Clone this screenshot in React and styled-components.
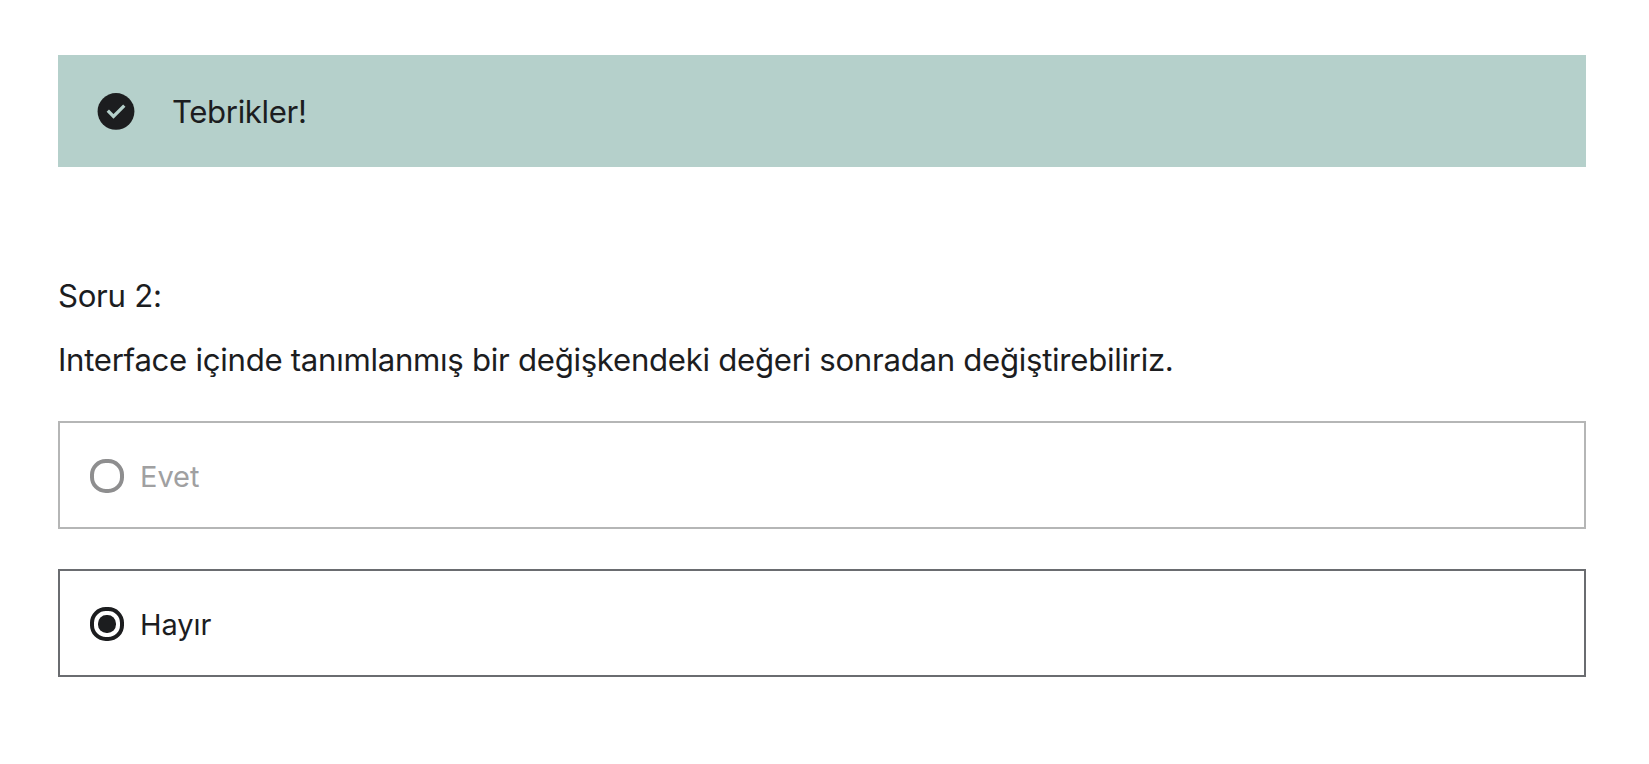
import React from "react";
import styled, { createGlobalStyle } from "styled-components";

const GlobalStyle = createGlobalStyle`
  * { box-sizing: border-box; }
  body {
    margin: 0;
    background: #fff;
    color: #1c1d1f;
    font-family: Inter, "Liberation Sans", sans-serif;
  }
`;

const Page = styled.main`
  padding: 55px 63px 0 58px;
`;

const Banner = styled.div`
  display: flex;
  align-items: center;
  gap: 37px;
  height: 112px;
  padding-left: 39px;
  background: #b5d0cb;
`;

const BannerIcon = styled.svg`
  display: block;
  flex: none;
  width: 38px;
  height: 38px;
`;

const BannerText = styled.span`
  padding-top: 2px;
  font-size: 31.2px;
  line-height: 44px;
  letter-spacing: -0.38px;
`;

const Question = styled.section`
  margin-top: 97px;
`;

const QuestionLine = styled.p`
  margin: 0;
  font-size: 31.2px;
  line-height: 64px;
  letter-spacing: -0.298px;
  white-space: nowrap;
`;

const Options = styled.div`
  display: flex;
  flex-direction: column;
  gap: 40px;
  margin-top: 29px;
`;

const Option = styled.label`
  display: flex;
  align-items: center;
  gap: 16px;
  height: 108px;
  padding: 2px 30px 0;
  border: 2px solid ${(p) => (p.$disabled ? "#b5b6b6" : "#6a6c70")};
  color: ${(p) => (p.$disabled ? "#a0a0a1" : "#1c1d1f")};
`;

const Radio = styled.span`
  display: grid;
  place-items: center;
  width: 34px;
  height: 34px;
  border: 4px solid ${(p) => (p.$disabled ? "#8e8e8f" : "#1c1d1f")};
  border-radius: 15.8px;
`;

const Dot = styled.span`
  width: 18px;
  height: 18px;
  border-radius: 8.5px;
  background: #1c1d1f;
`;

const OptionText = styled.span`
  padding-top: 2px;
  font-size: 29px;
  line-height: 40px;
  letter-spacing: -0.05px;
`;

const choices = [
  { text: "Evet", disabled: true },
  { text: "Hayır", selected: true },
];

export default function App() {
  return (
    <>
      <GlobalStyle />
      <Page>
        <Banner>
          <BannerIcon viewBox="0 0 38 38">
            <circle cx="19" cy="19.4" r="18.4" fill="#1c1d1f" />
            <path d="M10.8 18.7 16.5 24.5 27.3 13.7" fill="none" stroke="#b5d0cb" strokeWidth="3.3" />
          </BannerIcon>
          <BannerText>Tebrikler!</BannerText>
        </Banner>
        <Question>
          <QuestionLine>Soru 2:</QuestionLine>
          <QuestionLine>
            Interface içinde tanımlanmış bir değişkendeki değeri sonradan değiştirebiliriz.
          </QuestionLine>
        </Question>
        <Options>
          {choices.map(({ text, disabled, selected }) => (
            <Option key={text} $disabled={disabled}>
              <Radio $disabled={disabled}>{selected && <Dot />}</Radio>
              <OptionText>{text}</OptionText>
            </Option>
          ))}
        </Options>
      </Page>
    </>
  );
}
